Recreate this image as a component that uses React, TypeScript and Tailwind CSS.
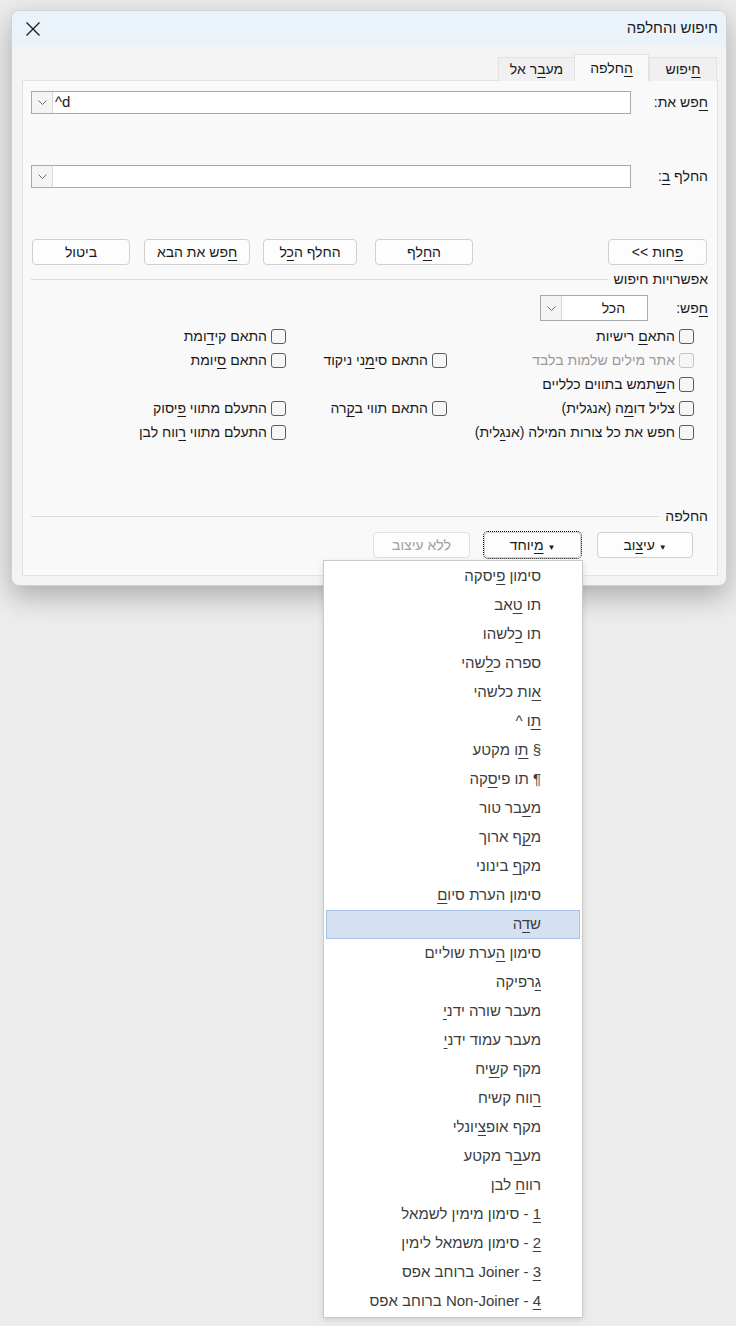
import React from 'react';

// "&" marks the access-key letter that gets underlined
const U = ({ t }: { t: string }) => {
  const i = t.indexOf('&');
  if (i < 0) return <span className="whitespace-pre">{t}</span>;
  return (
    <span className="whitespace-pre">
      {t.slice(0, i)}
      <span className="underline underline-offset-[3px]">{t[i + 1]}</span>
      {t.slice(i + 2)}
    </span>
  );
};

const Chevron = () => (
  <svg width="9" height="5" viewBox="0 0 9 5" fill="none">
    <path d="M0.5 0.5L4.5 4.5L8.5 0.5" stroke="#6b6b6b" strokeWidth="1" />
  </svg>
);

const Btn = ({ label, className = '' }: { label: React.ReactNode; className?: string }) => (
  <div
    className={`flex h-[26px] items-center justify-center rounded-[4px] border border-[#d0d0d0] bg-[#fdfdfd] ${className}`}
  >
    {label}
  </div>
);

const Check = ({ label, disabled = false }: { label: string; disabled?: boolean }) => (
  <div className="flex h-[24px] items-center gap-[4px]">
    <div
      className={`h-[15px] w-[15px] rounded-[3px] border bg-[#f6f6f6] ${
        disabled ? 'border-[#c4c4c4]' : 'border-[#5c5c5c]'
      }`}
    />
    <span className={`whitespace-nowrap ${disabled ? 'text-[#9a9a9a]' : ''}`}>
      <U t={label} />
    </span>
  </div>
);

const Combo = ({ value }: { value: string }) => (
  <div dir="ltr" className="flex h-[23px] flex-1 border border-[#a9a9a9] bg-white">
    <div className="flex w-[21px] items-center justify-center border-r border-[#dadada] bg-[#f4f4f4]">
      <Chevron />
    </div>
    <div className="flex items-center pl-[2px] text-[15px]">{value}</div>
  </div>
);

const Section = ({ title }: { title: string }) => (
  <div className="flex h-[16px] items-center gap-[6px]">
    <span className="whitespace-nowrap">{title}</span>
    <div className="h-px flex-1 bg-[#dcdcdc]" />
  </div>
);

const menuItems = [
  'סימון &פיסקה',
  'תו &טאב',
  'תו &כלשהו',
  'ספרה כ&לשהי',
  '&אות כלשהי',
  '&תו ^',
  '§ &תו מקטע',
  '¶ תו פי&סקה',
  'מ&עבר טור',
  'מ&קף ארוך',
  'מק&ף בינוני',
  'סימון הערת סיו&ם',
  'ש&דה',
  'סימון &הערת שוליים',
  '&גרפיקה',
  'מעבר שורה ידנ&י',
  'מעבר עמוד ידנ&י',
  'מקף ק&שיח',
  '&רווח קשיח',
  'מקף אופ&ציונלי',
  'מע&בר מקטע',
  'רוו&ח לבן',
  '&1 - סימון מימין לשמאל',
  '&2 - סימון משמאל לימין',
  '&3 - Joiner ברוחב אפס',
  '&4 - Non-Joiner ברוחב אפס',
];

export default function App() {
  return (
    <div className="relative min-h-[1326px] w-[736px] bg-[#ececec] pl-[11px] pt-[10px] font-['Liberation_Sans',sans-serif] text-[14px] text-[#1a1a1a]">
      <div
        dir="rtl"
        className="flex h-[576px] w-[716px] flex-col overflow-hidden rounded-[8px] border border-[#cdd2d6] bg-[#f3f3f3] shadow-[0_10px_28px_rgba(0,0,0,0.28)]"
      >
        {/* title bar */}
        <div className="flex h-[35px] items-center justify-between bg-[#eaf3fa] pl-[13px] pr-[8px]">
          <span className="text-[15px]">חיפוש והחלפה</span>
          <svg width="16" height="16" viewBox="0 0 16 16" fill="none">
            <path d="M1.5 1.5L14.5 14.5M14.5 1.5L1.5 14.5" stroke="#1a1a1a" strokeWidth="1.3" />
          </svg>
        </div>

        {/* tabs */}
        <div className="relative z-10 -mb-px flex h-[35px] items-end pr-[9px]">
          <div className="flex h-[24px] w-[68px] items-center justify-center border border-b-0 border-[#e2e2e2] bg-[#f0f0f0]">
            <U t="&חיפוש" />
          </div>
          <div className="flex h-[27px] w-[75px] items-center justify-center border border-b-0 border-[#e2e2e2] bg-[#f9f9f9]">
            <U t="&החלפה" />
          </div>
          <div className="flex h-[24px] w-[76px] items-center justify-center border border-b-0 border-r-0 border-[#e2e2e2] bg-[#f0f0f0]">
            <U t="מע&בר אל" />
          </div>
        </div>

        {/* panel */}
        <div className="mb-[9px] ml-[10px] mr-[8px] flex-1 border border-[#e2e2e2] bg-[#f9f9f9] pl-[8px] pr-[9px] pt-[10px]">
          <div className="flex h-[23px] items-center">
            <div className="w-[77px]">
              <U t="&חפש את:" />
            </div>
            <Combo value="^d" />
          </div>

          <div className="mt-[51px] flex h-[23px] items-center">
            <div className="w-[77px]">
              <U t="החלף &ב:" />
            </div>
            <Combo value="" />
          </div>

          <div className="mt-[51px] flex h-[26px] items-center">
            <Btn
              className="mr-px w-[99px]"
              label={
                <div dir="ltr" className="flex items-center gap-[4px]">
                  <span>{'<<'}</span>
                  <U t="&פחות" />
                </div>
              }
            />
            <div className="flex-1" />
            <Btn className="w-[98px]" label={<U t="ה&חלף" />} />
            <Btn className="mr-[18px] w-[94px]" label={<U t="החלף ה&כל" />} />
            <Btn className="mr-[13px] w-[106px]" label={<U t="&חפש את הבא" />} />
            <Btn className="ml-px mr-[14px] w-[98px]" label="ביטול" />
          </div>

          <div className="mt-[6px]">
            <Section title="אפשרויות חיפוש" />
          </div>

          <div className="mt-[8px] flex h-[26px] items-center">
            <div className="w-[60px]">
              <U t="&חפש:" />
            </div>
            <div className="flex h-[26px] w-[108px] border border-[#a9a9a9] bg-white">
              <div className="flex flex-1 items-center pr-[22px]">הכל</div>
              <div className="flex w-[21px] items-center justify-center border-r border-[#dadada] bg-[#f4f4f4]">
                <Chevron />
              </div>
            </div>
          </div>

          <div className="mr-[14px] mt-[3px] grid grid-cols-[247px_161px_1fr]">
            <Check label="התא&ם רישיות" />
            <div />
            <Check label="התאם קי&דומת" />

            <Check label="אתר מילים שלמות בלבד" disabled />
            <Check label="התאם סי&מני ניקוד" />
            <Check label="התאם &סיומת" />

            <Check label="ה&שתמש בתווים כלליים" />
            <div />
            <div />

            <Check label="צליל דו&מה (אנגלית)" />
            <Check label="התאם תווי ב&קרה" />
            <Check label="התעלם מתווי &פיסוק" />

            <Check label="חפש את כל צורות המילה (אנ&גלית)" />
            <div />
            <Check label="התעלם מתווי &רווח לבן" />
          </div>

          <div className="mt-[64px]">
            <Section title="החלפה" />
          </div>

          <div className="mr-[15px] mt-[8px] flex h-[26px] items-center">
            <Btn
              className="w-[96px]"
              label={
                <span className="whitespace-pre">
                  <span className="text-[8px]">▼</span> <U t="עי&צוב" />
                </span>
              }
            />
            <Btn
              className="mr-[16px] w-[97px] border-[#1f5fa8] bg-[#cce4f7] outline-1 outline-offset-0 outline-dotted outline-[#000]"
              label={
                <span className="whitespace-pre">
                  <span className="text-[8px]">▼</span> <U t="&מיוחד" />
                </span>
              }
            />
            <Btn
              className="mr-[14px] w-[97px] border-[#e0e0e0] text-[#a0a0a0]"
              label="ללא עיצוב"
            />
          </div>
        </div>
      </div>

      {/* special characters menu */}
      <div
        dir="rtl"
        className="absolute left-[323px] top-[560px] w-[260px] border border-[#c9c9c9] bg-white p-px text-[15px] text-[#3c3c3c] shadow-[0_2px_6px_rgba(0,0,0,0.12)]"
      >
        {menuItems.map((m, i) =>
          i === 12 ? (
            <div
              key={i}
              className="mx-px flex h-[29px] items-center border border-[#a7c0e6] bg-[#d5e1f2] pr-[38px]"
            >
              <U t={m} />
            </div>
          ) : (
            <div key={i} className="flex h-[29px] items-center whitespace-nowrap pr-[40px]">
              <U t={m} />
            </div>
          )
        )}
      </div>
    </div>
  );
}
